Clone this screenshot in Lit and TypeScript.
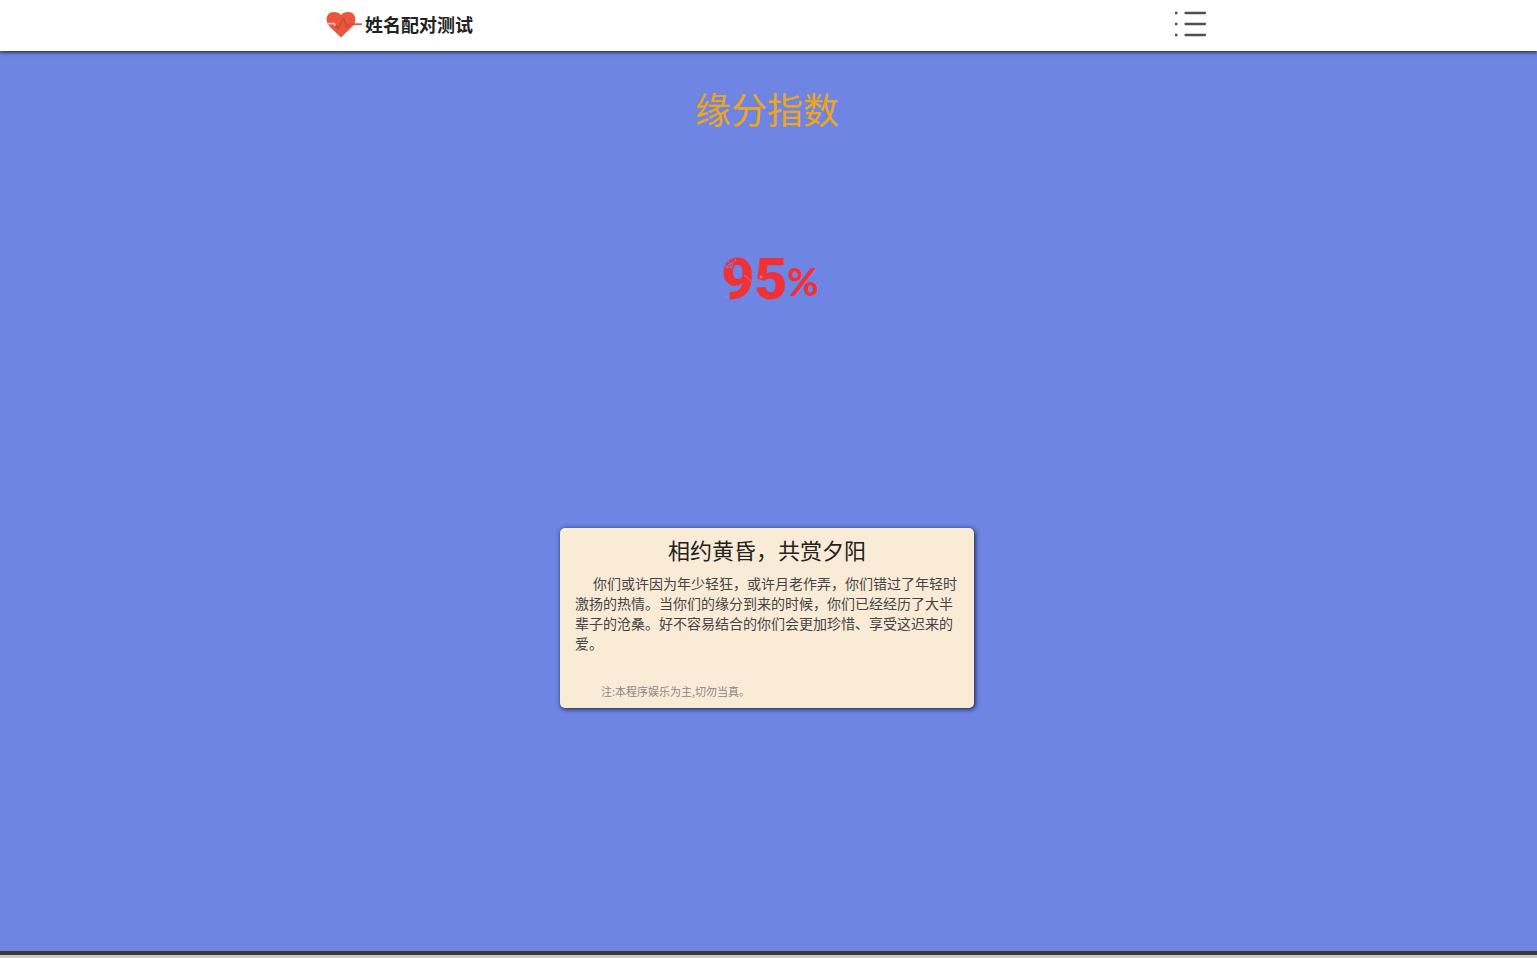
import { LitElement, html, css } from "lit";
import { customElement, property } from "lit/decorators.js";

@customElement("site-header")
class SiteHeader extends LitElement {
  static styles = css`
    :host {
      display: block;
      position: relative;
      padding: 0 3px 3px 0;
      background: #fff;
      box-shadow: 0 1px 4px rgba(0, 0, 0, 0.8);
    }
    .bar {
      display: flex;
      align-items: center;
      justify-content: space-between;
      max-width: 882px;
      height: 48px;
      margin: 0 auto;
    }
    .brand {
      display: flex;
      align-items: center;
      gap: 2px;
      color: #222;
      font-size: 18px;
      font-weight: 700;
      text-decoration: none;
    }
    .menu {
      display: flex;
      padding: 0;
      border: 0;
      background: none;
      cursor: pointer;
    }
    svg {
      display: block;
    }
  `;

  render() {
    return html`
      <header class="bar">
        <a class="brand" href="#">
          <svg width="37" height="28" viewBox="0 0 37 28" aria-hidden="true">
            <path
              fill="#e9573e"
              d="M15 27.500C12 24.500 4 17.500 1.700 14C-1 9 1 2 8 2C11.500 2 13.700 3.200 15 5.200C16.300 3.200 18.500 2 22 2C29 2 31 9 28.300 14C26 17.500 18 24.500 15 27.500Z"
            />
            <path fill="none" stroke="#f3c0b6" stroke-width="1.800" d="M1 13.600H8L9.500 16" />
            <path
              fill="none"
              stroke="#c94a36"
              stroke-width="1.600"
              stroke-linejoin="round"
              d="M9.500 15.500L12 18.500L17.500 8L21 17L24 14.200H28"
            />
            <path stroke="#e4543c" stroke-width="1.800" d="M27 14.200H36" />
          </svg>
          <span>姓名配对测试</span>
        </a>
        <button class="menu" type="button" aria-label="菜单">
          <svg width="33" height="28" viewBox="0 0 33 28" aria-hidden="true">
            <g stroke="#505050" stroke-width="2.300">
              <path d="M0 3H2.500M0 14H2.500M0 25H2.500" />
              <path stroke-linecap="round" d="M10.500 3H30M10.500 14H30M10.500 25H30" />
            </g>
          </svg>
        </button>
      </header>
    `;
  }
}

@customElement("match-score")
class MatchScore extends LitElement {
  @property({ type: Number }) value = 0;

  static styles = css`
    :host {
      display: flex;
      justify-content: center;
    }
    .score {
      position: relative;
      height: 60px;
      margin-left: 6px;
      color: #f03238;
      font-family: Roboto, sans-serif;
      font-size: 57px;
      font-weight: 900;
      line-height: 60px;
    }
    .percent {
      font-family: Lato, sans-serif;
      font-size: 38px;
      line-height: 1;
      vertical-align: 3px;
    }
    .cracks {
      position: absolute;
      top: 0;
      left: 0;
    }
  `;

  render() {
    return html`
      <div class="score">
        <span>${this.value}</span><span class="percent">%</span>
        <svg class="cracks" width="98" height="60" viewBox="0 0 98 60" aria-hidden="true">
          <g fill="none" stroke="#6e85e4" stroke-width="1">
            <path d="M2 15l4 2l2-3l3 3M7 11l3 3l3-2M12 14l-2 5M5 18l5-1M14 9l1 3" />
            <path stroke="#b478c8" d="M23 25l8 7M4 46l4 1M35 45l3-2M76 23v5" />
          </g>
          <circle cx="40" cy="27" r="1.500" fill="#b478c8" />
        </svg>
      </div>
    `;
  }
}

@customElement("result-card")
class ResultCard extends LitElement {
  static styles = css`
    :host {
      display: block;
      box-sizing: border-box;
      width: 100%;
      max-width: 414px;
      padding: 3px 15px 7px;
      border-radius: 5px;
      background: #faebd7;
      box-shadow: 1px 1px 5px rgba(0, 0, 0, 0.8);
    }
    h2 {
      margin: 0;
      color: #222;
      font-size: 22px;
      font-weight: 400;
      line-height: 36px;
      text-align: center;
    }
    .text {
      margin: 6px 0 0;
      color: #444;
      font-size: 14px;
      line-height: 20px;
      text-indent: 18px;
    }
    .note {
      margin: 28px 0 0;
      padding-left: 26px;
      color: #888;
      font-size: 11px;
      line-height: 20px;
    }
  `;

  render() {
    return html`
      <h2>相约黄昏，共赏夕阳</h2>
      <p class="text">你们或许因为年少轻狂，或许月老作弄，你们错过了年轻时激扬的热情。当你们的缘分到来的时候，你们已经经历了大半辈子的沧桑。好不容易结合的你们会更加珍惜、享受这迟来的爱。</p>
      <p class="note">注:本程序娱乐为主,切勿当真。</p>
    `;
  }
}

@customElement("app-root")
class AppRoot extends LitElement {
  static styles = css`
    :host {
      display: flex;
      flex-direction: column;
      min-height: 100vh;
      background: #6e85e4;
      font-family: "Noto Sans CJK SC", sans-serif;
    }
    main {
      flex: 1;
      display: flex;
      flex-direction: column;
      align-items: center;
      padding: 30px 3px 0 0;
    }
    h1 {
      margin: 0;
      color: #eea51c;
      font-size: 36px;
      font-weight: 400;
      line-height: 54px;
    }
    match-score {
      margin: 115px 0 218px;
    }
    footer {
      height: 3px;
      border-top: 4px solid #3a3a3c;
      background: #ccc;
    }
  `;

  render() {
    return html`
      <site-header></site-header>
      <main>
        <h1>缘分指数</h1>
        <match-score .value=${95}></match-score>
        <result-card></result-card>
      </main>
      <footer></footer>
    `;
  }
}
